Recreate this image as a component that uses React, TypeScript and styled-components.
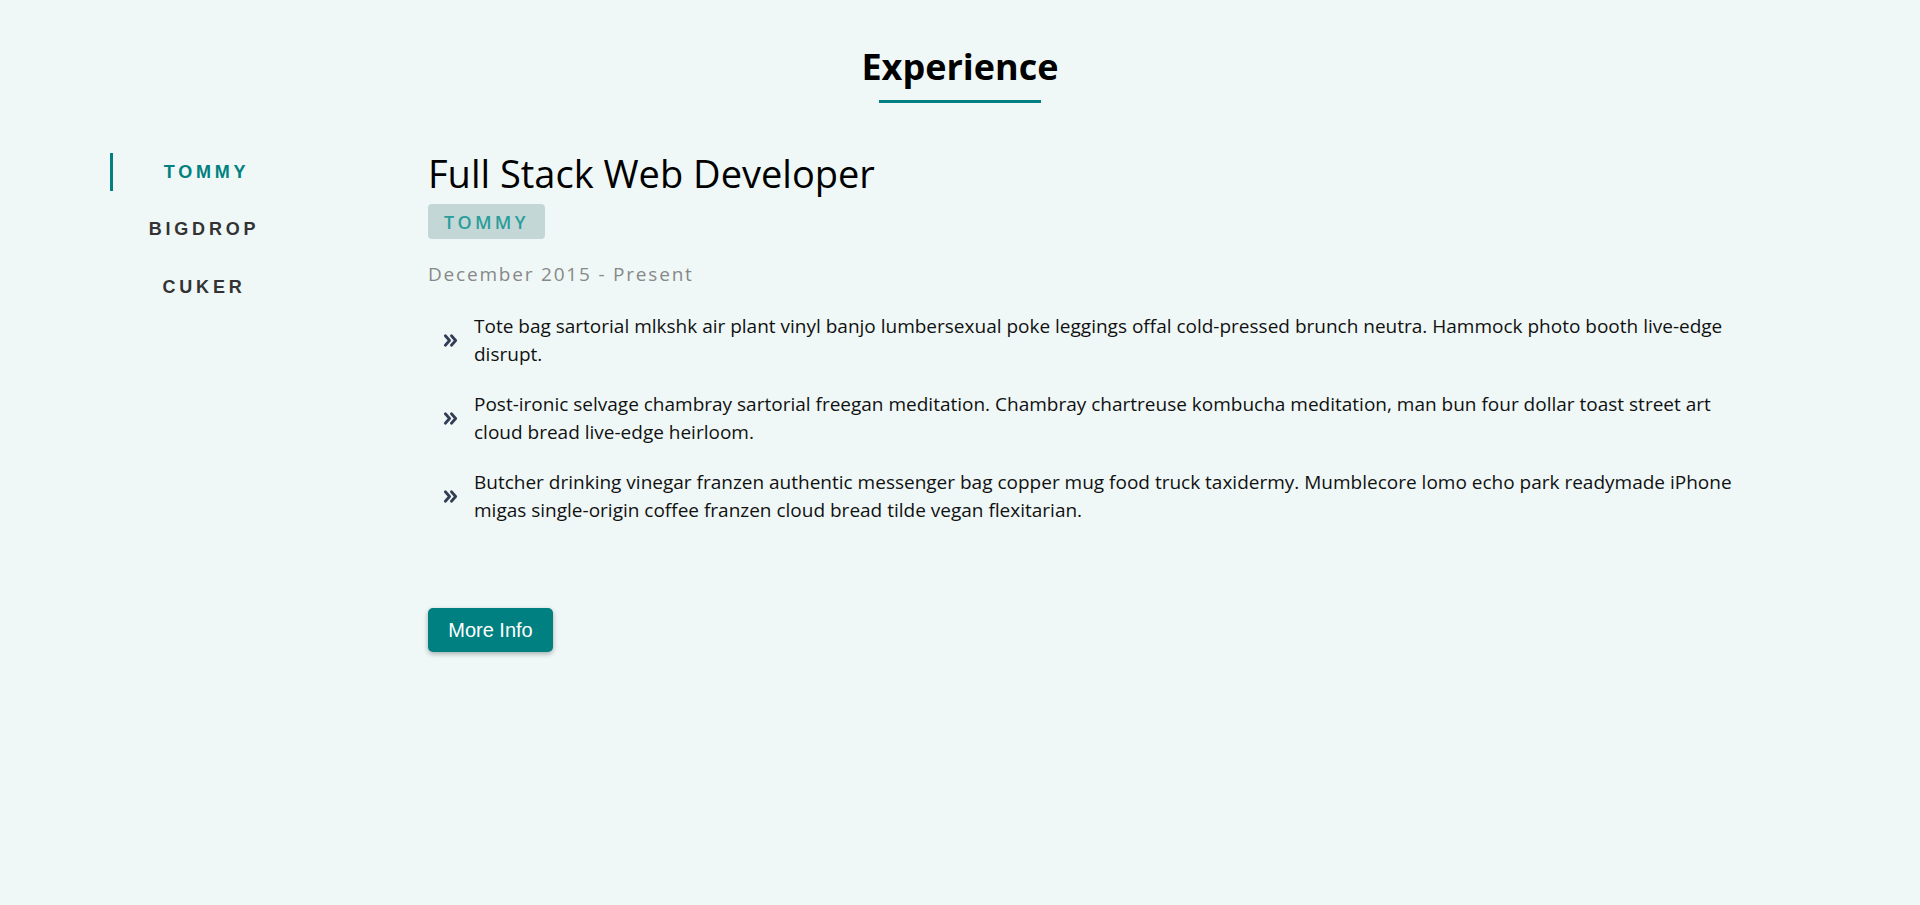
import React, { useState } from "react";
import styled, { createGlobalStyle } from "styled-components";

const GlobalStyle = createGlobalStyle`
  html, body {
    margin: 0;
    padding: 0;
    background: #eff8f7;
  }
  body {
    font-family: "Open Sans", "Noto Sans", sans-serif;
    color: #111;
  }
  * { box-sizing: border-box; }
`;

const Page = styled.section`
  min-height: 905px;
  background: #eff8f7;
  padding: 43px 110px 0;
`;

const Header = styled.header`
  display: flex;
  flex-direction: column;
  align-items: center;
  margin-bottom: 50px;
`;

const Heading = styled.h2`
  margin: 0;
  font-family: "Open Sans", "Noto Sans", sans-serif;
  font-size: 36px;
  font-weight: 700;
  line-height: 48px;
  color: #000;
`;

const Underline = styled.span`
  display: block;
  width: 162px;
  height: 3px;
  margin-top: 9px;
  background: #008080;
`;

const Layout = styled.div`
  display: flex;
  align-items: flex-start;
`;

const Tabs = styled.nav`
  display: flex;
  flex-direction: column;
  gap: 19.5px;
  width: 185px;
  flex-shrink: 0;
`;

const Tab = styled.button<{ $active?: boolean }>`
  display: flex;
  align-items: center;
  justify-content: center;
  height: 38px;
  padding: 0 0 0 ${(p) => (p.$active ? "5px" : "0")};
  margin: 0;
  border: none;
  border-left: 3px solid ${(p) => (p.$active ? "#008080" : "transparent")};
  background: transparent;
  font-family: "Liberation Sans", Arial, sans-serif;
  font-weight: 700;
  font-size: 18px;
  letter-spacing: 3.8px;
  color: ${(p) => (p.$active ? "#008080" : "#333")};
  cursor: pointer;
`;

const Content = styled.article`
  flex: 1;
  max-width: 1310px;
  margin-left: 133px;
`;

const JobTitle = styled.h3`
  margin: 0;
  font-family: "Open Sans", "Noto Sans", sans-serif;
  font-size: 38px;
  font-weight: 400;
  line-height: 40px;
  color: #000;
`;

const Company = styled.span`
  display: inline-flex;
  align-items: center;
  height: 35px;
  margin-top: 11px;
  padding: 0 16px 0 16px;
  border-radius: 4px;
  background: #c4d7d7;
  font-family: "Open Sans", "Noto Sans", sans-serif;
  font-size: 18px;
  font-weight: 600;
  letter-spacing: 3.3px;
  color: #2a9d9a;
`;

const Dates = styled.p`
  margin: 21px 0 0;
  font-family: "Open Sans", "Noto Sans", sans-serif;
  font-size: 19px;
  letter-spacing: 1.8px;
  line-height: 28px;
  color: #888;
`;

const Duties = styled.ul`
  list-style: none;
  margin: 24px 0 0;
  padding: 0 0 0 15px;
  display: flex;
  flex-direction: column;
  gap: 22px;
`;

const Duty = styled.li`
  display: flex;
  align-items: center;
  gap: 16px;
  font-family: "Open Sans", "Noto Sans", sans-serif;
  font-size: 19px;
  line-height: 28px;
  color: #111;
`;

const Bullet = styled.svg`
  width: 15px;
  height: 15px;
  flex-shrink: 0;
  color: #323e55;
`;

const MoreButton = styled.button`
  display: block;
  margin-top: 84px;
  width: 125px;
  height: 44px;
  border: none;
  border-radius: 5px;
  background: #008080;
  color: #fff;
  font-family: "Liberation Sans", Arial, sans-serif;
  font-size: 20px;
  box-shadow: 0 2px 5px rgba(0, 0, 0, 0.3);
  cursor: pointer;
`;

const jobs = [
  {
    company: "TOMMY",
    title: "Full Stack Web Developer",
    range: "December 2015 - Present",
    duties: [
      "Tote bag sartorial mlkshk air plant vinyl banjo lumbersexual poke leggings offal cold-pressed brunch neutra. Hammock photo booth live-edge disrupt.",
      "Post-ironic selvage chambray sartorial freegan meditation. Chambray chartreuse kombucha meditation, man bun four dollar toast street art cloud bread live-edge heirloom.",
      "Butcher drinking vinegar franzen authentic messenger bag copper mug food truck taxidermy. Mumblecore lomo echo park readymade iPhone migas single-origin coffee franzen cloud bread tilde vegan flexitarian.",
    ],
  },
  {
    company: "BIGDROP",
    title: "Front-End Engineer",
    range: "May 2015 - December 2015",
    duties: [
      "Hashtag drinking vinegar scenester mumblecore snackwave four dollar toast, lumbersexual XOXO.",
    ],
  },
  {
    company: "CUKER",
    title: "Engineering Intern",
    range: "May 2014 - September 2015",
    duties: ["I'm baby woke mlkshk wolf bitters live-edge blue bottle."],
  },
];

const ChevronsIcon = () => (
  <Bullet viewBox="0 0 16 16" fill="none" stroke="currentColor" strokeWidth={3} strokeLinecap="round" strokeLinejoin="round">
    <polyline points="2.5,3 7,8 2.5,13" />
    <polyline points="9,3 13.5,8 9,13" />
  </Bullet>
);

export default function App() {
  const [active, setActive] = useState(0);
  const job = jobs[active];
  return (
    <>
      <GlobalStyle />
      <Page>
        <Header>
          <Heading>Experience</Heading>
          <Underline />
        </Header>
        <Layout>
          <Tabs>
            {jobs.map((j, i) => (
              <Tab key={j.company} $active={i === active} onClick={() => setActive(i)}>
                {j.company}
              </Tab>
            ))}
          </Tabs>
          <Content>
            <JobTitle>{job.title}</JobTitle>
            <Company>{job.company}</Company>
            <Dates>{job.range}</Dates>
            <Duties>
              {job.duties.map((d) => (
                <Duty key={d}>
                  <ChevronsIcon />
                  <span>{d}</span>
                </Duty>
              ))}
            </Duties>
            <MoreButton>More Info</MoreButton>
          </Content>
        </Layout>
      </Page>
    </>
  );
}
